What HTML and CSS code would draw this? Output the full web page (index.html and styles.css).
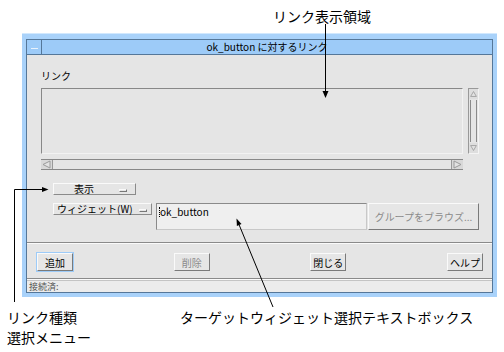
FILE: index.html
```html
<!DOCTYPE html>
<html lang="ja">
<head>
    <meta charset="UTF-8">
    <title>ok_button に対するリンク</title>
    <link rel="stylesheet" href="styles.css">
</head>
<body>
<div class="page">
    <!-- Top caption -->
    <div class="top-note">リンク表示領域</div>

    <!-- Dialog window -->
    <div class="window">
        <div class="inner">
            <div class="titlebar">
                <div class="menu-btn"><span></span></div>
                <div class="title">ok_button に対するリンク</div>
            </div>

            <div class="dialog">
                <div class="label">リンク</div>

                <div class="list-row">
                    <div class="list"></div>
                    <div class="vscroll">
                        <div class="arrow">
                            <svg width="11" height="10" viewBox="0 0 11 10"><polygon points="5.5,2 9,8 2,8" fill="#e2e2e2" stroke="#9a9a9a"/></svg>
                        </div>
                        <div class="trough-v"></div>
                        <div class="arrow">
                            <svg width="11" height="10" viewBox="0 0 11 10"><polygon points="2,2 9,2 5.5,8" fill="#e2e2e2" stroke="#9a9a9a"/></svg>
                        </div>
                    </div>
                </div>
                <div class="hscroll">
                    <div class="arrow">
                        <svg width="11" height="11" viewBox="0 0 11 11"><polygon points="2,5.5 9,2 9,9" fill="#e2e2e2" stroke="#9a9a9a"/></svg>
                    </div>
                    <div class="trough-h"></div>
                    <div class="arrow">
                        <svg width="11" height="11" viewBox="0 0 11 11"><polygon points="2,2 9,5.5 2,9" fill="#e2e2e2" stroke="#9a9a9a"/></svg>
                    </div>
                </div>

                <div class="option show-opt">
                    <span class="opt-text">表示</span>
                    <span class="opt-mark"></span>
                </div>

                <div class="target-row">
                    <div class="option widget-opt">
                        <span class="opt-text">ウィジェット(W)</span>
                        <span class="opt-mark"></span>
                    </div>
                    <div class="textfield"><span class="caret"></span>ok_button</div>
                    <div class="btn browse disabled">グループをブラウズ...</div>
                </div>

                <div class="separator sep-top"></div>

                <div class="actions">
                    <div class="btn default">追加</div>
                    <div class="btn disabled">削除</div>
                    <div class="btn">閉じる</div>
                    <div class="btn">ヘルプ</div>
                </div>

                <div class="separator sep-bottom"></div>
            </div>

            <div class="status">接続済:</div>
        </div>
    </div>

    <!-- Bottom captions -->
    <div class="notes">
        <div class="note-left">リンク種類<br>選択メニュー</div>
        <div class="note-right">ターゲットウィジェット選択テキストボックス</div>
    </div>

    <!-- Callout lines -->
    <svg class="callouts" width="504" height="352" viewBox="0 0 504 352">
        <line x1="325.5" y1="24" x2="325.5" y2="92" stroke="#000" stroke-width="1"/>
        <polygon points="322.5,91 328.5,91 325.5,98" fill="#000"/>

        <polyline points="14.5,302 14.5,189.5 43,189.5" fill="none" stroke="#000" stroke-width="1"/>
        <polygon points="42,187 42,192 48.5,189.5" fill="#000"/>

        <line x1="273" y1="307" x2="239.2" y2="225" stroke="#000" stroke-width="1"/>
        <polygon points="236.5,218.5 241.5,224 236.9,226" fill="#000"/>
    </svg>
</div>
</body>
</html>
```
FILE: styles.css
```css
/* General */
* {
    box-sizing: border-box;
}
body {
    margin: 0;
    background: #fff;
    font-family: "Noto Sans CJK JP", "DejaVu Sans", sans-serif;
    color: #000;
}
.page {
    position: relative;
    width: 504px;
    height: 352px;
    overflow: hidden;
}

/* Captions */
.top-note {
    height: 33px;
    padding: 6px 0 0 273px;
    font-size: 14px;
    line-height: 20px;
}
.notes {
    display: flex;
    padding: 10px 0 0 7px;
    font-size: 14px;
    line-height: 20px;
}
.note-left {
    width: 173px;
}

/* Window frame */
.window {
    margin-left: 22px;
    width: 475px;
    height: 264px;
    padding: 5px 4px 4px 4px;
    background: #a9d2fa;
    border-top: 1px solid #d2e8fd;
}
.inner {
    height: 100%;
    display: flex;
    flex-direction: column;
    border: 1px solid #557799;
    background: #e5e5e5;
}
.titlebar {
    display: flex;
    height: 15px;
    background: #9dcbf8;
    border-bottom: 1px solid #557799;
}
.menu-btn {
    width: 15px;
    border-right: 1px solid #557799;
    display: flex;
    align-items: center;
    justify-content: center;
}
.menu-btn span {
    width: 7px;
    height: 1px;
    background: #e8f2fc;
    margin-top: 2px;
}
.title {
    flex: 1;
    text-align: center;
    font-size: 10px;
    line-height: 14px;
}

/* Dialog body */
.dialog {
    flex: 1;
    font-size: 10px;
}
.label {
    margin: 15px 0 0 14px;
    line-height: 12px;
}
.list-row {
    display: flex;
    gap: 5px;
    margin: 6px 0 0 14px;
    height: 66px;
}
.list {
    width: 422px;
    border: 1px solid;
    border-color: #888 #f2f2f2 #f2f2f2 #888;
}
.vscroll {
    width: 11px;
    display: flex;
    flex-direction: column;
    border: 1px solid;
    border-color: #999 #f4f4f4 #f4f4f4 #999;
}
.vscroll .arrow {
    height: 10px;
    display: flex;
    align-items: center;
    justify-content: center;
    background: #dedede;
}
.trough-v {
    flex: 1;
    margin: 1px 1px;
    border-left: 1px solid #8a8a8a;
    border-right: 1px solid #8a8a8a;
}
.hscroll {
    display: flex;
    margin: 5px 0 0 14px;
    width: 422px;
    height: 11px;
    border-top: 1px solid #888;
    border-bottom: 1px solid #888;
}
.hscroll .arrow {
    width: 11px;
    display: flex;
    align-items: center;
    justify-content: center;
    background: #d8d8d8;
}
.trough-h {
    flex: 1;
    border-left: 1px solid #999;
    border-right: 1px solid #999;
}

/* Option menus */
.option {
    display: flex;
    align-items: center;
    height: 12px;
    line-height: 10px;
    white-space: nowrap;
    border: 1px solid;
    border-color: #fafafa #8a8a8a #8a8a8a #fafafa;
}
.show-opt {
    margin: 13px 0 0 26px;
    width: 83px;
    padding: 0 8px 0 20px;
}
.opt-text {
    flex: 1;
}
.widget-opt {
    width: 99px;
    padding: 0 4px 0 3px;
}
.opt-mark {
    flex-shrink: 0;
    width: 8px;
    height: 3px;
    border: 1px solid;
    border-color: #fafafa #777 #777 #fafafa;
    margin-top: 3px;
}

.target-row {
    display: flex;
    align-items: flex-start;
    margin: 8px 0 0 26px;
}
.textfield {
    width: 211px;
    height: 27px;
    margin-left: 4px;
    padding: 2px 0 0 2px;
    line-height: 12px;
    background: #efefef;
    border: 1px solid;
    border-color: #8a8a8a #c8c8c8 #c8c8c8 #8a8a8a;
}
.caret {
    display: inline-block;
    width: 1px;
    height: 10px;
    border-left: 1px dotted #000;
    vertical-align: -1px;
}

/* Buttons */
.btn {
    display: flex;
    align-items: center;
    justify-content: center;
    width: 36px;
    height: 18px;
    font-size: 10px;
    white-space: nowrap;
    background: #e6e6e6;
    border: 1px solid;
    border-color: #fafafa #7a7a7a #7a7a7a #fafafa;
}
.btn.disabled {
    color: #8a8a8a;
}
.btn.default {
    box-shadow: 0 0 0 1px #9dcbf8;
}
.browse {
    width: 111px;
    height: 27px;
    margin-left: 1px;
}

.separator {
    height: 2px;
    border-top: 1px solid #8a8a8a;
    border-bottom: 1px solid #fafafa;
}
.sep-top {
    margin-top: 12px;
}
.sep-bottom {
    margin-top: 7px;
}
.actions {
    display: flex;
    justify-content: space-between;
    margin-top: 9px;
    padding: 0 9px 0 10px;
}

/* Status line */
.status {
    height: 12px;
    padding-left: 2px;
    font-size: 9px;
    line-height: 11px;
    color: #555;
    background: #ececec;
    border-top: 1px solid #c4c4c4;
}

/* Callout overlay */
.callouts {
    position: absolute;
    top: 0;
    left: 0;
    pointer-events: none;
}
```
